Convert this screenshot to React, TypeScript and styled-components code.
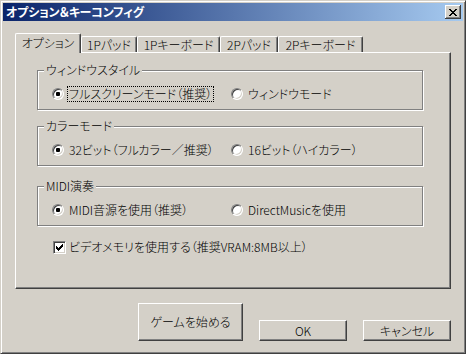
import React from "react";
import styled, { createGlobalStyle } from "styled-components";

const Global = createGlobalStyle`
  html, body { margin: 0; padding: 0; background: #D4D0C8; }
  body { font-family: "Noto Sans CJK JP", "Noto Sans", sans-serif; font-size: 12px; }
`;

const FONT = `"Noto Sans CJK JP", "Noto Sans CJK SC", sans-serif`;

const Window = styled.div`
  width: 466px;
  height: 354px;
  box-sizing: border-box;
  background: #d4d0c8;
  border: 1px solid;
  border-color: #d4d0c8 #404040 #404040 #d4d0c8;
  box-shadow: inset 1px 1px 0 #fff, inset -1px -1px 0 #808080;
  padding: 2px;
  display: flex;
  flex-direction: column;
  font-family: ${FONT};
  font-size: 12px;
  font-weight: 300;
  font-feature-settings: "palt";
  color: #000;
`;

const TitleBar = styled.div`
  height: 18px;
  flex: none;
  display: flex;
  align-items: center;
  justify-content: space-between;
  padding: 0 2px 0 3px;
  background: linear-gradient(to right, #0a246a, #a6caf0);
`;

const TitleText = styled.span`
  color: #fff;
  font-weight: bold;
  font-size: 12px;
  line-height: 14px;
  letter-spacing: -0.2px;
`;

const CloseButton = styled.div`
  width: 16px;
  height: 14px;
  box-sizing: border-box;
  background: #d4d0c8;
  box-shadow: inset -1px -1px 0 #404040, inset 1px 1px 0 #fff,
    inset -2px -2px 0 #808080;
  display: flex;
  align-items: center;
  justify-content: center;
  padding-right: 1px;
`;

const Body = styled.div`
  display: flex;
  flex-direction: column;
  padding: 12px 12px 0 12px;
`;

const TabStrip = styled.div`
  display: flex;
  align-items: flex-end;
  height: 19px;
`;

const Tab = styled.div<{ $active?: boolean; $w: number }>`
  box-sizing: border-box;
  width: ${(p) => p.$w}px;
  height: ${(p) => (p.$active ? 20 : 16)}px;
  margin-bottom: ${(p) => (p.$active ? -1 : 0)}px;
  padding-bottom: ${(p) => (p.$active ? 2 : 0)}px;
  display: flex;
  align-items: center;
  justify-content: center;
  background: #d4d0c8;
  border-top: 1px solid #fff;
  border-left: 1px solid #fff;
  border-right: 1px solid #404040;
  box-shadow: inset -1px 0 0 #808080;
  border-radius: 2px 2px 0 0;
  position: relative;
  z-index: ${(p) => (p.$active ? 2 : 0)};
  line-height: 14px;
  white-space: nowrap;
`;

const Panel = styled.div`
  box-sizing: border-box;
  width: 436px;
  height: 237px;
  border: 1px solid;
  border-color: #fff #404040 #404040 #fff;
  box-shadow: inset -1px -1px 0 #808080;
  padding: 10px 0 0 21px;
  display: flex;
  flex-direction: column;
  position: relative;
  z-index: 1;
`;

const Group = styled.fieldset<{ $top: number }>`
  box-sizing: border-box;
  width: 386px;
  margin: ${(p) => p.$top}px 0 0 0;
  padding: 0 0 9px 6px;
  border: 1px solid #808080;
  box-shadow: inset 1px 1px 0 #fff, 1px 1px 0 #fff;
  min-inline-size: 0;
`;

const Legend = styled.legend`
  padding: 0 2px;
  margin: 0;
  line-height: 14px;
  height: 14px;
  background: #d4d0c8;
  white-space: nowrap;
`;

const OptionRow = styled.div`
  display: grid;
  grid-template-columns: 179px auto;
  padding: 9px 0 0 8px;
  height: 14px;
  align-items: center;
`;

const Option = styled.label`
  display: flex;
  align-items: center;
  gap: 3px;
  white-space: nowrap;
`;

const Radio = styled.span<{ $checked?: boolean }>`
  box-sizing: border-box;
  width: 12px;
  height: 12px;
  flex: none;
  border-radius: 50%;
  background: #fff;
  border: 1px solid;
  border-color: #808080 #fff #fff #808080;
  box-shadow: inset 1px 1px 0 #404040, inset -1px -1px 0 #d4d0c8;
  display: flex;
  align-items: center;
  justify-content: center;
  &::after {
    content: "";
    display: ${(p) => (p.$checked ? "block" : "none")};
    width: 4px;
    height: 4px;
    border-radius: 1px;
    background: #000;
  }
`;

const LabelText = styled.span<{ $focus?: boolean }>`
  line-height: 14px;
  padding: 0 1px;
  border: 1px dotted ${(p) => (p.$focus ? "#000" : "transparent")};
`;

const CheckRow = styled.label`
  display: flex;
  align-items: center;
  gap: 3px;
  margin: 14px 0 0 16px;
  line-height: 14px;
  white-space: nowrap;
`;

const CheckBox = styled.span`
  box-sizing: border-box;
  width: 13px;
  height: 13px;
  flex: none;
  background: #fff;
  border: 1px solid;
  border-color: #808080 #fff #fff #808080;
  box-shadow: inset 1px 1px 0 #404040, inset -1px -1px 0 #d4d0c8;
  display: flex;
  align-items: center;
  justify-content: center;
`;

const ButtonRow = styled.div`
  display: flex;
  justify-content: flex-end;
  align-items: flex-end;
  gap: 16px;
  margin-top: 14px;
  padding-right: 0px;
`;

const Button = styled.button<{ $w: number; $h: number }>`
  box-sizing: border-box;
  width: ${(p) => p.$w}px;
  height: ${(p) => p.$h}px;
  padding: 0;
  background: #d4d0c8;
  border: 1px solid;
  border-color: #fff #404040 #404040 #fff;
  box-shadow: inset -1px -1px 0 #808080;
  font-family: ${FONT};
  font-feature-settings: "palt";
  font-size: 12px;
  font-weight: 300;
  line-height: 14px;
  color: #000;
  white-space: nowrap;
`;

const CloseIcon = () => (
  <svg width="8" height="7" viewBox="0 0 8 7" shapeRendering="crispEdges">
    {Array.from({ length: 7 }).map((_, i) => (
      <React.Fragment key={i}>
        <rect x={i} y={i} width="2" height="1" fill="#000" />
        <rect x={6 - i} y={i} width="2" height="1" fill="#000" />
      </React.Fragment>
    ))}
  </svg>
);

const CheckIcon = () => (
  <svg width="7" height="7" viewBox="0 0 7 7" shapeRendering="crispEdges">
    {[2, 3, 4, 3, 2, 1, 0].map((y, x) => (
      <rect key={x} x={x} y={y} width="1" height="3" fill="#000" />
    ))}
  </svg>
);

const tabs = [
  { label: "オプション", w: 66, active: true },
  { label: "1Pパッド", w: 56 },
  { label: "1Pキーボード", w: 83 },
  { label: "2Pパッド", w: 58 },
  { label: "2Pキーボード", w: 85 },
];

export default function App() {
  return (
    <>
      <Global />
      <Window>
        <TitleBar>
          <TitleText>オプション＆キーコンフィグ</TitleText>
          <CloseButton>
            <CloseIcon />
          </CloseButton>
        </TitleBar>
        <Body>
          <TabStrip>
            {tabs.map((t) => (
              <Tab key={t.label} $w={t.w} $active={t.active}>
                {t.label}
              </Tab>
            ))}
          </TabStrip>
          <Panel>
            <Group $top={0}>
              <Legend>ウィンドウスタイル</Legend>
              <OptionRow>
                <Option>
                  <Radio $checked />
                  <LabelText $focus>フルスクリーンモード（推奨）</LabelText>
                </Option>
                <Option>
                  <Radio />
                  <LabelText>ウィンドウモード</LabelText>
                </Option>
              </OptionRow>
            </Group>
            <Group $top={9}>
              <Legend>カラーモード</Legend>
              <OptionRow>
                <Option>
                  <Radio $checked />
                  <LabelText>32ビット（フルカラー／推奨）</LabelText>
                </Option>
                <Option>
                  <Radio />
                  <LabelText>16ビット（ハイカラー）</LabelText>
                </Option>
              </OptionRow>
            </Group>
            <Group $top={13}>
              <Legend>MIDI演奏</Legend>
              <OptionRow>
                <Option>
                  <Radio $checked />
                  <LabelText>MIDI音源を使用（推奨）</LabelText>
                </Option>
                <Option>
                  <Radio />
                  <LabelText>DirectMusicを使用</LabelText>
                </Option>
              </OptionRow>
            </Group>
            <CheckRow>
              <CheckBox>
                <CheckIcon />
              </CheckBox>
              <span>ビデオメモリを使用する（推奨VRAM:8MB以上）</span>
            </CheckRow>
          </Panel>
          <ButtonRow>
            <Button $w={105} $h={38}>ゲームを始める</Button>
            <Button $w={88} $h={21}>OK</Button>
            <Button $w={88} $h={21}>キャンセル</Button>
          </ButtonRow>
        </Body>
      </Window>
    </>
  );
}
